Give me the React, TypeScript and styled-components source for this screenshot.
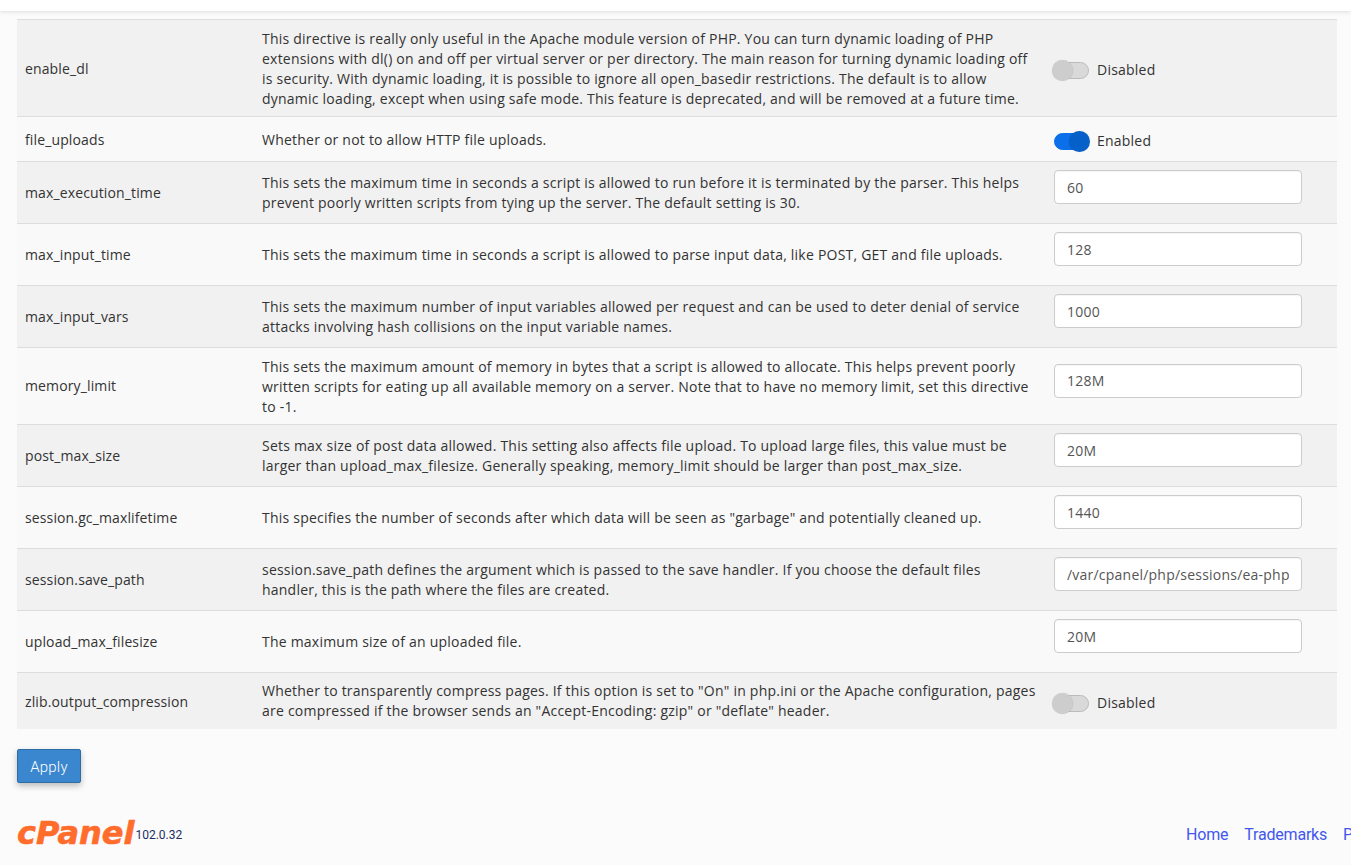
import React from "react";
import styled, { createGlobalStyle } from "styled-components";

const GlobalStyle = createGlobalStyle`
  html, body {
    margin: 0;
    height: 865px;
    overflow: hidden;
    background: #fbfbfb;
    color: #333;
    font-family: "Open Sans", "Liberation Sans", sans-serif;
    font-size: 14px;
    line-height: 20px;
    letter-spacing: 0.22px;
  }
`;

const TopBar = styled.div`
  height: 11px;
  background: #fff;
  box-shadow: 0 1px 4px rgba(0, 0, 0, 0.12);
`;

const Content = styled.main`
  padding: 8px 14px 0 17px;
`;

const Table = styled.table`
  width: 1320px;
  table-layout: fixed;
  border-collapse: collapse;
`;

const Row = styled.tr`
  border-top: 1px solid #ddd;
  background: #f9f9f9;

  &:nth-child(odd) {
    background: #f1f1f1;
  }
`;

const Cell = styled.td`
  padding: 8px;
  vertical-align: middle;
`;

const NameCell = styled(Cell)<{ $low: boolean }>`
  width: 221px;
  letter-spacing: 0.13px;
  padding-top: ${(p) => (p.$low ? "10px" : "8px")};
`;

const DescCell = styled(Cell)<{ $low: boolean }>`
  width: 776px;
  padding-top: ${(p) => (p.$low ? "9px" : "8px")};
  padding-bottom: ${(p) => (p.$low ? "7px" : "8px")};
`;

const InputWrap = styled.div`
  height: 45px;
  box-sizing: border-box;
`;

const TextField = styled.input`
  display: block;
  box-sizing: border-box;
  width: 248px;
  height: 34px;
  padding: 6px 12px;
  border: 1px solid #ccc;
  border-radius: 4px;
  background: #fff;
  color: #555;
  font: inherit;
  letter-spacing: inherit;
  box-shadow: inset 0 1px 1px rgba(0, 0, 0, 0.04);
`;

const ToggleWrap = styled.div`
  display: flex;
  align-items: center;
  box-sizing: border-box;
  height: 28px;
  padding-top: 4px;
  gap: 8px;
`;

const Track = styled.div<{ $on: boolean }>`
  position: relative;
  width: 35px;
  height: 17px;
  box-sizing: border-box;
  border-radius: 9px;
  background: ${(p) => (p.$on ? "#0a6fe8" : "#d9d9d9")};
  border: 1px solid ${(p) => (p.$on ? "#0a6fe8" : "#bbb")};
`;

const Knob = styled.div<{ $on: boolean }>`
  position: absolute;
  top: -3px;
  ${(p) => (p.$on ? "right: -2px;" : "left: -3px;")}
  width: 21px;
  height: 21px;
  border-radius: 50%;
  background: ${(p) => (p.$on ? "#0560c9" : "#cdcdcd")};
  box-shadow: 0 0 1px rgba(0, 0, 0, 0.2);
`;

const Actions = styled.div`
  margin-top: 20px;
`;

const ApplyButton = styled.button`
  display: block;
  width: 64px;
  height: 34px;
  padding: 2px 0 0;
  border: 1px solid #2e6da4;
  border-radius: 2px;
  background: #3a87cf;
  color: #fff;
  font-family: Roboto, "Liberation Sans", sans-serif;
  font-size: 15px;
  font-weight: 300;
  letter-spacing: 0.2px;
  box-shadow: 0 3px 6px rgba(0, 0, 0, 0.25);
`;

const Footer = styled.footer`
  display: grid;
  grid-template-columns: 1169px auto;
  align-items: center;
  margin-top: 33px;
  height: 34px;
`;

const Brand = styled.div`
  display: flex;
  align-items: flex-end;
  gap: 1px;
`;

const Logo = styled.span`
  color: #ff6c2c;
  font-family: "DejaVu Sans", Lato, sans-serif;
  font-size: 32px;
  font-weight: 700;
  font-style: italic;
  line-height: 28px;
  letter-spacing: 0;
  -webkit-text-stroke: 0.6px #ff6c2c;
`;

const Version = styled.span`
  color: #1b2f63;
  font-family: Roboto, "Liberation Sans", sans-serif;
  font-size: 12px;
  line-height: 20px;
  letter-spacing: 0;
  padding-bottom: 2px;
`;

const Links = styled.nav`
  display: flex;
  gap: 16px;
  padding-top: 3px;
`;

const FooterLink = styled.a`
  color: #4257ee;
  font-family: Roboto, "Liberation Sans", sans-serif;
  font-size: 16px;
  letter-spacing: -0.2px;
  white-space: nowrap;
`;

type Setting = {
  name: string;
  desc: string;
  toggle?: boolean;
  value?: string;
  low?: boolean;
};

const settings: Setting[] = [
  {
    name: "enable_dl",
    desc: "This directive is really only useful in the Apache module version of PHP. You can turn dynamic loading of PHP extensions with dl() on and off per virtual server or per directory. The main reason for turning dynamic loading off is security. With dynamic loading, it is possible to ignore all open_basedir restrictions. The default is to allow dynamic loading, except when using safe mode. This feature is deprecated, and will be removed at a future time.",
    toggle: false,
    low: true,
  },
  {
    name: "file_uploads",
    desc: "Whether or not to allow HTTP file uploads.",
    toggle: true,
    low: true,
  },
  {
    name: "max_execution_time",
    desc: "This sets the maximum time in seconds a script is allowed to run before it is terminated by the parser. This helps prevent poorly written scripts from tying up the server. The default setting is 30.",
    value: "60",
  },
  {
    name: "max_input_time",
    desc: "This sets the maximum time in seconds a script is allowed to parse input data, like POST, GET and file uploads.",
    value: "128",
  },
  {
    name: "max_input_vars",
    desc: "This sets the maximum number of input variables allowed per request and can be used to deter denial of service attacks involving hash collisions on the input variable names.",
    value: "1000",
  },
  {
    name: "memory_limit",
    desc: "This sets the maximum amount of memory in bytes that a script is allowed to allocate. This helps prevent poorly written scripts for eating up all available memory on a server. Note that to have no memory limit, set this directive to -1.",
    value: "128M",
    low: true,
  },
  {
    name: "post_max_size",
    desc: "Sets max size of post data allowed. This setting also affects file upload. To upload large files, this value must be larger than upload_max_filesize. Generally speaking, memory_limit should be larger than post_max_size.",
    value: "20M",
  },
  {
    name: "session.gc_maxlifetime",
    desc: 'This specifies the number of seconds after which data will be seen as "garbage" and potentially cleaned up.',
    value: "1440",
  },
  {
    name: "session.save_path",
    desc: "session.save_path defines the argument which is passed to the save handler. If you choose the default files handler, this is the path where the files are created.",
    value: "/var/cpanel/php/sessions/ea-php74",
  },
  {
    name: "upload_max_filesize",
    desc: "The maximum size of an uploaded file.",
    value: "20M",
  },
  {
    name: "zlib.output_compression",
    desc: 'Whether to transparently compress pages. If this option is set to "On" in php.ini or the Apache configuration, pages are compressed if the browser sends an "Accept-Encoding: gzip" or "deflate" header.',
    toggle: false,
  },
];

export default function App() {
  return (
    <>
      <GlobalStyle />
      <TopBar />
      <Content>
        <Table>
          <tbody>
            {settings.map((s) => (
              <Row key={s.name}>
                <NameCell $low={s.toggle !== undefined}>{s.name}</NameCell>
                <DescCell $low={!!s.low}>{s.desc}</DescCell>
                <Cell>
                  {s.toggle === undefined ? (
                    <InputWrap>
                      <TextField defaultValue={s.value} />
                    </InputWrap>
                  ) : (
                    <ToggleWrap>
                      <Track $on={s.toggle}>
                        <Knob $on={s.toggle} />
                      </Track>
                      <span>{s.toggle ? "Enabled" : "Disabled"}</span>
                    </ToggleWrap>
                  )}
                </Cell>
              </Row>
            ))}
          </tbody>
        </Table>
        <Actions>
          <ApplyButton>Apply</ApplyButton>
        </Actions>
        <Footer>
          <Brand>
            <Logo>cPanel</Logo>
            <Version>102.0.32</Version>
          </Brand>
          <Links>
            <FooterLink>Home</FooterLink>
            <FooterLink>Trademarks</FooterLink>
            <FooterLink>Privacy Policy</FooterLink>
          </Links>
        </Footer>
      </Content>
    </>
  );
}
